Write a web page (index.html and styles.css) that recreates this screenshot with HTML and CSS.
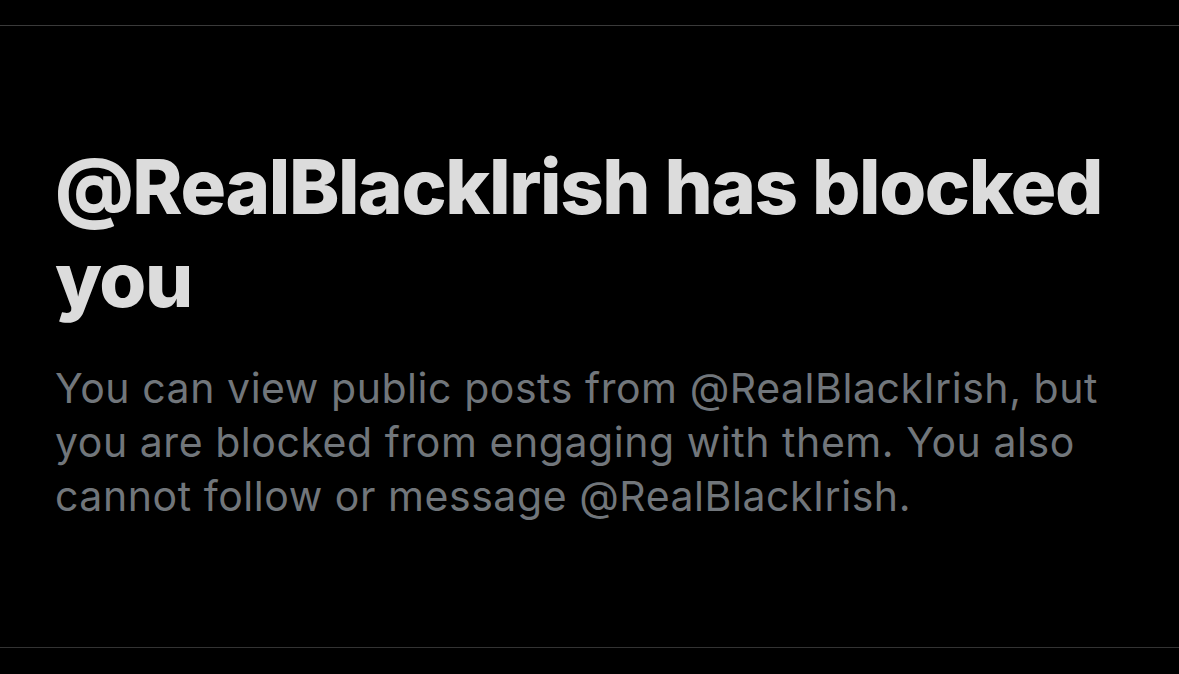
FILE: index.html
```html
<!DOCTYPE html>
<html lang="en">
<head>
<meta charset="utf-8">
<title>Blocked</title>
<link rel="stylesheet" href="styles.css">
</head>
<body>
<main class="panel">
  <section class="notice">
    <h1 class="notice-title">@RealBlackIrish has blocked you</h1>
    <p class="notice-text">You can view public posts from @RealBlackIrish, but you are blocked from engaging with them. You also cannot follow or message @RealBlackIrish.</p>
  </section>
</main>
</body>
</html>
```
FILE: styles.css
```css
html, body {
  margin: 0;
  padding: 0;
  background: #000;
}
body {
  height: 674px;
  overflow: hidden;
  padding-top: 25px;
  box-sizing: border-box;
}
.panel {
  border-top: 1px solid #3a3a3a;
  border-bottom: 1px solid #333;
  height: 623px;
  box-sizing: border-box;
}
.notice {
  padding: 114px 0 0 55px;
  width: 1085px;
  font-family: Inter, "Noto Sans", sans-serif;
}
.notice-title {
  margin: 0;
  font-size: 76px;
  line-height: 93px;
  font-weight: 800;
  color: #dcdcdc;
  letter-spacing: -1.4px;
}
.notice-text {
  margin: 35px 0 0;
  font-size: 41px;
  line-height: 54px;
  font-weight: 400;
  color: #71767b;
  letter-spacing: 0.55px;
}
```
